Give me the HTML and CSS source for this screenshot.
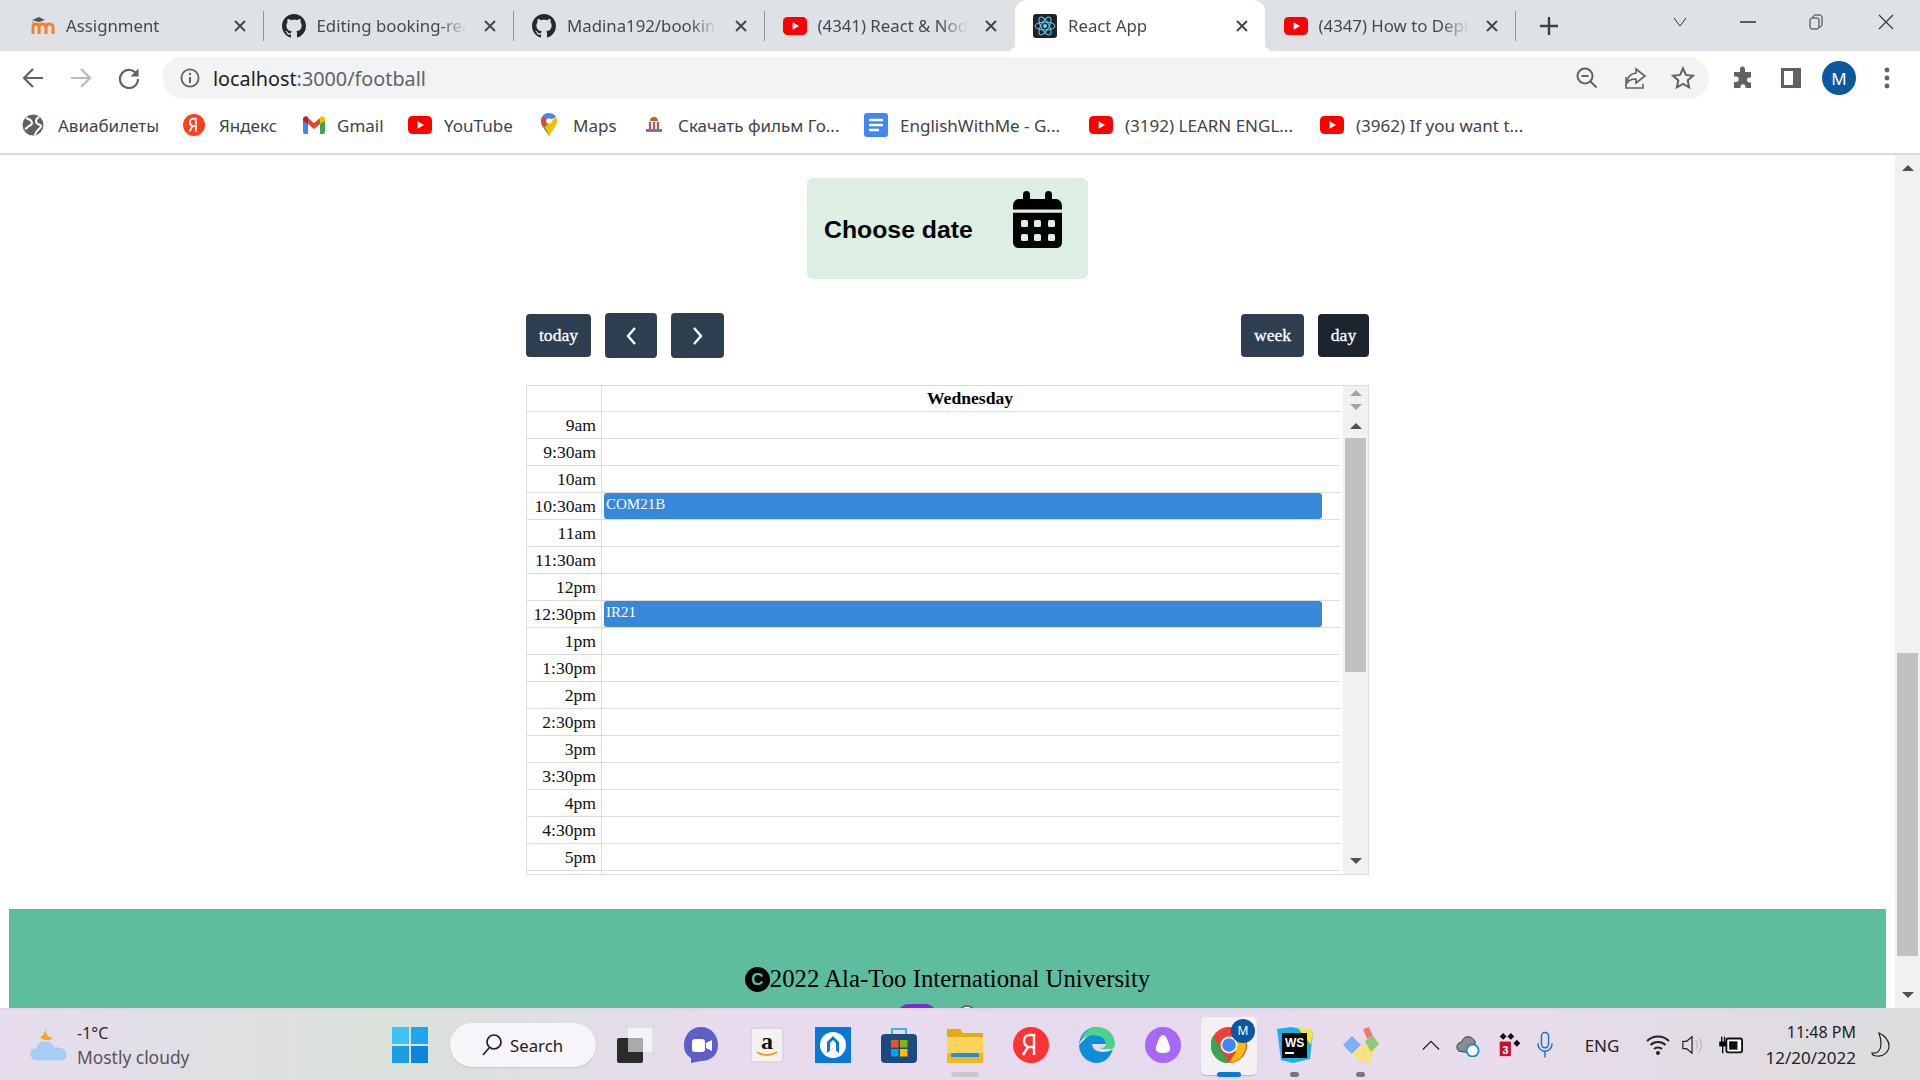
FILE: index.html
```html
<!DOCTYPE html>
<html lang="en">
<head>
<meta charset="utf-8">
<title>React App</title>
<link rel="stylesheet" href="styles.css">
</head>
<body>
<svg class="defs" width="0" height="0">
  <defs>
    <symbol id="gh" viewBox="0 0 16 16"><path fill="#24292e" d="M8 0C3.58 0 0 3.58 0 8c0 3.54 2.29 6.53 5.47 7.59.4.07.55-.17.55-.38 0-.19-.01-.82-.01-1.49-2.01.37-2.53-.49-2.69-.94-.09-.23-.48-.94-.82-1.13-.28-.15-.68-.52-.01-.53.63-.01 1.08.58 1.23.82.72 1.21 1.87.87 2.33.66.07-.52.28-.87.51-1.07-1.78-.2-3.64-.89-3.64-3.95 0-.87.31-1.59.82-2.15-.08-.2-.36-1.02.08-2.12 0 0 .67-.21 2.2.82.64-.18 1.32-.27 2-.27.68 0 1.36.09 2 .27 1.53-1.04 2.2-.82 2.2-.82.44 1.1.16 1.92.08 2.12.51.56.82 1.27.82 2.15 0 3.07-1.87 3.75-3.65 3.95.29.25.54.73.54 1.48 0 1.07-.01 1.93-.01 2.2 0 .21.15.46.55.38A8.013 8.013 0 0016 8c0-4.42-3.58-8-8-8z"/></symbol>
    <symbol id="yt" viewBox="0 0 24 18"><rect width="24" height="18" rx="4.5" fill="#f00"/><path d="M9.6 5.2v7.6l6.4-3.8z" fill="#fff"/></symbol>
    <symbol id="x" viewBox="0 0 12 12"><path d="M1 1l10 10M11 1L1 11" stroke="#44474b" stroke-width="2" fill="none"/></symbol>
  </defs>
</svg>
<div class="screen">

  <header class="tabstrip">
    <div class="tab">
      <svg class="tab-ico" viewBox="0 0 24 24"><path d="M2 20v-7c0-2 1-3 3-3s3 1 3 3v7M8 20v-7c0-2 1-3 3-3M11 10c3 0 4 1 4 3v7M15 13c0-2 1-3 3-3s4 1 4 3v7" fill="none" stroke="#f58220" stroke-width="3"/><path d="M1 6l7-3 6 3-6 2z" fill="#555"/><path d="M2 7v5" stroke="#999"/></svg>
      <span class="tab-text">Assignment</span>
      <svg class="tab-x"><use href="#x"/></svg>
    </div>
    <i class="tab-sep"></i>
    <div class="tab">
      <svg class="tab-ico"><use href="#gh"/></svg>
      <span class="tab-text">Editing booking-react-app</span>
      <svg class="tab-x"><use href="#x"/></svg>
    </div>
    <i class="tab-sep"></i>
    <div class="tab">
      <svg class="tab-ico"><use href="#gh"/></svg>
      <span class="tab-text">Madina192/booking-react</span>
      <svg class="tab-x"><use href="#x"/></svg>
    </div>
    <i class="tab-sep"></i>
    <div class="tab">
      <svg class="tab-ico"><use href="#yt"/></svg>
      <span class="tab-text">(4341) React &amp; Node JS</span>
      <svg class="tab-x"><use href="#x"/></svg>
    </div>
    <i class="tab-gap"></i>
    <div class="tab tab-active">
      <svg class="tab-ico" viewBox="0 0 24 24"><rect width="24" height="24" rx="3" fill="#20232a"/><g fill="none" stroke="#61dafb" stroke-width="1"><ellipse cx="12" cy="12" rx="10" ry="4"/><ellipse cx="12" cy="12" rx="10" ry="4" transform="rotate(60 12 12)"/><ellipse cx="12" cy="12" rx="10" ry="4" transform="rotate(120 12 12)"/></g><circle cx="12" cy="12" r="2" fill="#61dafb"/></svg>
      <span class="tab-text">React App</span>
      <svg class="tab-x"><use href="#x"/></svg>
    </div>
    <i class="tab-gap"></i>
    <div class="tab">
      <svg class="tab-ico"><use href="#yt"/></svg>
      <span class="tab-text">(4347) How to Deploy React</span>
      <svg class="tab-x"><use href="#x"/></svg>
    </div>
    <i class="tab-sep"></i>
    <svg class="tab-plus" viewBox="0 0 18 18"><path d="M9 0v18M0 9h18" stroke="#3c4043" stroke-width="2.4"/></svg>
    <div class="winctl">
      <svg class="win-chev" viewBox="0 0 16 16"><path d="M2 4l6 8 6-8" fill="none" stroke="#333" stroke-width="1"/></svg>
      <svg class="win-min" viewBox="0 0 16 16"><path d="M0 8h16" stroke="#222" stroke-width="1.4"/></svg>
      <svg class="win-res" viewBox="0 0 16 16"><rect x="2" y="4" width="9" height="11" rx="2" fill="none" stroke="#333"/><path d="M5 4V3c0-1 1-2 2-2h5c1 0 2 1 2 2v8c0 1-1 2-2 2h-1" fill="none" stroke="#333"/></svg>
      <svg class="win-x" viewBox="0 0 16 16"><path d="M1 1l14 14M15 1L1 15" stroke="#333" stroke-width="1.1"/></svg>
    </div>
  </header>

  <nav class="toolbar">
    <svg class="nav-ico" viewBox="0 0 22 22"><path d="M21 11H3M11 2l-9 9 9 9" fill="none" stroke="#5f6368" stroke-width="2.2"/></svg>
    <svg class="nav-ico" viewBox="0 0 22 22"><path d="M1 11h18M11 2l9 9-9 9" fill="none" stroke="#b8babd" stroke-width="2.2"/></svg>
    <svg class="nav-ico" viewBox="0 0 22 22"><path d="M18.5 7A9 9 0 1 0 20 12" fill="none" stroke="#5f6368" stroke-width="2.2"/><path d="M20.5 1.5v8h-8z" fill="#5f6368"/></svg>
    <div class="omnibox">
      <svg class="info-ico" viewBox="0 0 20 20"><circle cx="10" cy="10" r="8.6" fill="none" stroke="#5f6368" stroke-width="1.8"/><path d="M10 9v6" stroke="#5f6368" stroke-width="2"/><circle cx="10" cy="6" r="1.2" fill="#5f6368"/></svg>
      <span class="url"><b class="url-host">localhost</b>:3000/football</span>
      <div class="omni-actions">
        <svg class="omni-ico" viewBox="0 0 24 24"><circle cx="10" cy="10" r="7.5" fill="none" stroke="#5f6368" stroke-width="2"/><path d="M6.5 10h7M15.5 15.5l6 6" stroke="#5f6368" stroke-width="2"/></svg>
        <svg class="omni-ico" viewBox="0 0 24 24"><path d="M13 7V3l9 7-9 7v-4c-4 0-7 1-9 4 0-5 3-9 9-10z" fill="none" stroke="#5f6368" stroke-width="1.6"/><path d="M3 11v11h17v-4" fill="none" stroke="#5f6368" stroke-width="1.6"/></svg>
        <svg class="omni-ico" viewBox="0 0 24 24"><path d="M12 2.5l2.9 6.4 7 .8-5.2 4.7 1.4 6.9-6.1-3.5-6.1 3.5 1.4-6.9-5.2-4.7 7-.8z" fill="none" stroke="#5f6368" stroke-width="2"/></svg>
      </div>
    </div>
    <svg class="tool-puzzle" viewBox="0 0 24 24"><path d="M9 2.5a2.6 2.6 0 0 1 5 0V6h6v5.500h-2.200a2.600 2.600 0 0 0 0 5H20V22h-5.500v-1.800a2.600 2.600 0 0 0-5 0V22H3v-6h2a2.700 2.700 0 0 0 0-5.400H3V6h6z" fill="#5f6368"/></svg>
    <svg class="tool-side" viewBox="0 0 22 24"><path d="M1 2h20v20H1zM4 5v14h9V5z" fill="#5f6368" fill-rule="evenodd"/></svg>
    <div class="avatar">M</div>
    <svg class="tool-dots" viewBox="0 0 6 24"><circle cx="3" cy="4" r="2.400" fill="#5f6368"/><circle cx="3" cy="12" r="2.400" fill="#5f6368"/><circle cx="3" cy="20" r="2.400" fill="#5f6368"/></svg>
  </nav>

  <div class="bookmarks">
    <div class="bm bm-air"><svg class="bm-ico" viewBox="0 0 22 22"><circle cx="11" cy="11" r="10.500" fill="#5f6368"/><path d="M4 4c3 1 6 2 6 5s-4 2-5 5l-2 1M13 21c0-3 2-4 4-6s3-3 1-4-4-1-4-4 2-3 3-4" fill="none" stroke="#fff" stroke-width="2"/></svg><span>Авиабилеты</span></div>
    <div class="bm bm-ya"><svg class="bm-ico" viewBox="0 0 24 24"><circle cx="12" cy="12" r="12" fill="#fc3f1d"/><path d="M14 19V5h-2.500C9 5 7.500 6.800 7.500 9s1.200 3.500 3 4l-3.500 6M14 13h-3" fill="none" stroke="#fff" stroke-width="2"/></svg><span>Яндекс</span></div>
    <div class="bm bm-gm"><svg class="bm-gmail" viewBox="0 0 22 18"><path d="M0 3v13c0 1 .7 2 2 2h3V7z" fill="#4285f4"/><path d="M22 3v13c0 1-.7 2-2 2h-3V7z" fill="#34a853"/><path d="M5 8V2l6 5 6-5v6l-6 5z" fill="#ea4335"/><path d="M0 5V3c0-2.500 3-3.500 5-2v7z" fill="#c5221f"/><path d="M22 5V3c0-2.500-3-3.500-5-2v7z" fill="#fbbc04"/></svg><span>Gmail</span></div>
    <div class="bm bm-yt"><svg class="bm-yt-ico"><use href="#yt"/></svg><span>YouTube</span></div>
    <div class="bm bm-map"><svg class="bm-maps" viewBox="0 0 16 24"><path d="M8 24C6 18 0 14 0 8a8 8 0 0 1 8-8z" fill="#34a853"/><path d="M8 24c2-6 8-10 8-16 0-1.500-.4-3-1.100-4L4 14c1.500 3 3 6 4 10z" fill="#fbbc04"/><path d="M1.500 3.500A8 8 0 0 0 0 8c0 2 .7 4 2 6l6-6z" fill="#ea4335"/><path d="M2 3l5 5 8-4a8 8 0 0 0-13-1z" fill="#4285f4"/><circle cx="8" cy="8" r="2.800" fill="#fff"/></svg><span>Maps</span></div>
    <div class="bm bm-film"><svg class="bm-ticket" viewBox="0 0 18 20"><path d="M5 6a4 4 0 0 1 8 0z" fill="#b4652c"/><rect x="3" y="6" width="12" height="8" fill="#eee"/><path d="M5 7v7M9 7v7M13 7v7" stroke="#a33" stroke-width="1.600"/><rect x="1" y="14" width="16" height="3" fill="#8a6ab0"/></svg><span>Скачать фильм Го...</span></div>
    <div class="bm bm-doc"><svg class="bm-doc-ico" viewBox="0 0 24 24"><rect width="24" height="24" rx="3" fill="#4285f4"/><path d="M5 7h14M5 12h14M5 17h10" stroke="#fff" stroke-width="2.400"/></svg><span>EnglishWithMe - G...</span></div>
    <div class="bm bm-learn"><svg class="bm-yt-ico"><use href="#yt"/></svg><span>(3192) LEARN ENGL...</span></div>
    <div class="bm bm-want"><svg class="bm-yt-ico"><use href="#yt"/></svg><span>(3962) If you want t...</span></div>
  </div>

  <div class="page">
    <main class="content">
      <div class="choose">
        <span class="choose-text">Choose date</span>
        <svg class="choose-ico" viewBox="0 0 49 57"><path d="M10 3.500a3.500 3.500 0 0 1 7 0V8h15V3.500a3.500 3.500 0 0 1 7 0V8h4c3 0 6 3 6 7v3.500H0V15c0-4 3-7 6-7h4z" fill="#000"/><path d="M0 21.700h49V51c0 3-2 6-5 6H5c-3 0-5-3-5-6z" fill="#000"/><g fill="#ddeee2"><rect x="8" y="29" width="7" height="7" rx="1.500"/><rect x="21" y="29" width="7" height="7" rx="1.500"/><rect x="35" y="29" width="7" height="7" rx="1.500"/><rect x="8" y="43" width="7" height="7" rx="1.500"/><rect x="21" y="43" width="7" height="7" rx="1.500"/><rect x="35" y="43" width="7" height="7" rx="1.500"/></g></svg>
      </div>

      <div class="fc">
        <div class="fc-toolbar">
          <div class="fc-group">
            <span class="fc-btn fc-btn-today">today</span>
            <span class="fc-btn fc-btn-prev"><svg class="fc-chev" viewBox="0 0 12 20"><path d="M10 2l-7 8 7 8" fill="none" stroke="#fff" stroke-width="2.400"/></svg></span>
            <span class="fc-btn fc-btn-next"><svg class="fc-chev" viewBox="0 0 12 20"><path d="M2 2l7 8-7 8" fill="none" stroke="#fff" stroke-width="2.400"/></svg></span>
          </div>
          <div class="fc-group">
            <span class="fc-btn fc-btn-week">week</span>
            <span class="fc-btn fc-btn-day">day</span>
          </div>
        </div>

        <div class="cal">
          <div class="cal-main">
            <div class="cal-row cal-head"><div class="cal-time"></div><div class="cal-day cal-dayname">Wednesday</div></div>
            <div class="cal-row"><div class="cal-time">9am</div><div class="cal-day"></div></div>
            <div class="cal-row"><div class="cal-time">9:30am</div><div class="cal-day"></div></div>
            <div class="cal-row"><div class="cal-time">10am</div><div class="cal-day"></div></div>
            <div class="cal-row"><div class="cal-time">10:30am</div><div class="cal-day"><div class="event">COM21B</div></div></div>
            <div class="cal-row"><div class="cal-time">11am</div><div class="cal-day"></div></div>
            <div class="cal-row"><div class="cal-time">11:30am</div><div class="cal-day"></div></div>
            <div class="cal-row"><div class="cal-time">12pm</div><div class="cal-day"></div></div>
            <div class="cal-row"><div class="cal-time">12:30pm</div><div class="cal-day"><div class="event">IR21</div></div></div>
            <div class="cal-row"><div class="cal-time">1pm</div><div class="cal-day"></div></div>
            <div class="cal-row"><div class="cal-time">1:30pm</div><div class="cal-day"></div></div>
            <div class="cal-row"><div class="cal-time">2pm</div><div class="cal-day"></div></div>
            <div class="cal-row"><div class="cal-time">2:30pm</div><div class="cal-day"></div></div>
            <div class="cal-row"><div class="cal-time">3pm</div><div class="cal-day"></div></div>
            <div class="cal-row"><div class="cal-time">3:30pm</div><div class="cal-day"></div></div>
            <div class="cal-row"><div class="cal-time">4pm</div><div class="cal-day"></div></div>
            <div class="cal-row"><div class="cal-time">4:30pm</div><div class="cal-day"></div></div>
            <div class="cal-row"><div class="cal-time">5pm</div><div class="cal-day"></div></div>
            <div class="cal-row"><div class="cal-time"></div><div class="cal-day"></div></div>
          </div>
          <div class="cal-scroll">
            <i class="arrow-up arrow-faint cal-a1"></i>
            <i class="arrow-down arrow-faint cal-a2"></i>
            <i class="arrow-up arrow-dark cal-a3"></i>
            <div class="cal-thumb"></div>
            <i class="arrow-down arrow-dark cal-a4"></i>
          </div>
        </div>
      </div>

      <footer class="footer">
        <p class="footer-text"><span class="copy">C</span>2022 Ala-Too International University</p>
        <div class="footer-social">
          <svg class="soc soc-purple" viewBox="0 0 38 38"><rect width="38" height="38" rx="10" fill="#7b2fc9"/></svg>
          <svg class="soc soc-gray" viewBox="0 0 18 18"><circle cx="9" cy="9" r="8" fill="#fff" stroke="#555" stroke-width="1.500"/></svg>
        </div>
      </footer>
    </main>
    <aside class="page-scroll">
      <i class="arrow-up arrow-dark ps-a1"></i>
      <div class="ps-thumb"></div>
      <i class="arrow-down arrow-dark ps-a2"></i>
    </aside>
  </div>

  <div class="taskbar">
    <div class="weather">
      <svg class="weather-ico" viewBox="0 0 37 34"><path d="M16 0c-1 5 1 9 7 10-3 3-10 3-13-1 2 0 5-4 6-9z" fill="#f5a623"/><path d="M8 33c-5 0-8-3-8-7s3-6 6-6c1-5 5-8 10-7 4 0 7 3 8 6 7-1 13 2 13 8 0 4-3 6-7 6z" fill="#a9cdf0" stroke="#d9e6f6"/></svg>
      <div class="weather-text"><span class="weather-temp">-1°C</span><span class="weather-desc">Mostly cloudy</span></div>
    </div>
    <div class="apps">
      <svg class="app" viewBox="0 0 36 36"><path d="M0 0h17v17H0z" fill="#3ec2f3"/><path d="M19 0h17v17H19z" fill="#1ea5ec"/><path d="M0 19h17v17H0z" fill="#1b9de6"/><path d="M19 19h17v17H19z" fill="#0c86dc"/></svg>
      <div class="search"><svg class="search-ico" viewBox="0 0 20 24"><circle cx="12" cy="9" r="7" fill="none" stroke="#222" stroke-width="1.700"/><path d="M7 15l-6 7" stroke="#222" stroke-width="1.700"/></svg><span>Search</span></div>
      <svg class="app" viewBox="0 0 36 36"><rect x="11" y="1" width="24" height="24" fill="#f4f4f6"/><rect y="11" width="26" height="25" rx="2" fill="#2b2b2b"/><rect x="11" y="11" width="15" height="14" fill="#aaa"/></svg>
      <svg class="app" viewBox="0 0 36 36"><path d="M18 0c10 0 17 8 17 18s-7 16-17 16l-10 2v-5C3 28 1 24 1 18 1 8 8 0 18 0z" fill="#5b5fc7"/><rect x="9" y="12" width="13" height="13" rx="3" fill="#fff"/><path d="M23 16l6-3v11l-6-3z" fill="#fff"/></svg>
      <svg class="app" viewBox="0 0 36 36"><rect x="2" y="1" width="32" height="34" rx="3" fill="#f3f1f1" stroke="#ccc"/><text x="18" y="22" class="amz">a</text><path d="M8 25c6 4 14 4 20 0" fill="none" stroke="#f90" stroke-width="2"/></svg>
      <svg class="app" viewBox="0 0 36 36"><rect width="36" height="36" fill="#0a78d7"/><circle cx="18" cy="18" r="13" fill="#fff"/><path d="M12 26V15l6-6 6 6v11l-6-5z" fill="#0a78d7"/><path d="M15 24v-8l3-3 3 3v8l-3-3z" fill="#fff"/></svg>
      <svg class="app" viewBox="0 0 36 36"><path d="M11 8V2h14v6" fill="none" stroke="#39b7ea" stroke-width="2"/><rect y="7" width="36" height="29" rx="4" fill="#1c4a7e"/><rect x="10" y="13" width="7.500" height="7.500" fill="#f25022"/><rect x="19" y="13" width="7.500" height="7.500" fill="#7fba00"/><rect x="10" y="22" width="7.500" height="7.500" fill="#00a4ef"/><rect x="19" y="22" width="7.500" height="7.500" fill="#ffb900"/></svg>
      <div class="app-wrap"><svg class="app" viewBox="0 0 36 36"><path d="M0 2h13l3 4h20v30H0z" fill="#e7a913"/><path d="M0 10h36v26H0z" fill="#fcd35c"/><path d="M0 26h36v10H0z" fill="#f0b81c"/><path d="M4 28c0-1 1-2 2-2h24c1 0 2 1 2 2v2H4z" fill="#1d8fe0"/></svg><i class="ind ind-wide"></i></div>
      <svg class="app" viewBox="0 0 36 36"><circle cx="18" cy="18" r="18" fill="#f33"/><path d="M21 28V8h-4c-4 0-6 2.500-6 6s2 5 4 6l-5 8M21 20h-5" fill="none" stroke="#fff" stroke-width="2.400"/></svg>
      <svg class="app" viewBox="0 0 36 36"><path d="M18 0C8 0 1 7 0 17 3 10 9 8 15 8c8 0 12 4 12 9H13c0 5 5 8 11 8 4 0 8-1 10-3-3 9-9 14-16 14C8 36 0 28 0 18" fill="#0c8fd8"/><path d="M18 0c10 0 18 7 18 17 0 3-2 5-6 5H21c3-1 6-3 6-5 0-5-4-9-12-9C10 8 5 10 2 13 5 5 11 0 18 0z" fill="#4fd18c"/></svg>
      <svg class="app" viewBox="0 0 36 36"><circle cx="18" cy="18" r="18" fill="#a668f5"/><path d="M18 8c3 0 5 6 7 12 1 4-2 6-7 6s-8-2-7-6c2-6 4-12 7-12z" fill="#fff"/></svg>
      <div class="app-wrap app-active"><svg class="app" viewBox="0 0 36 36"><circle cx="18" cy="18" r="18" fill="#ea4335"/><path d="M18 36A18 18 0 0 1 2 9l9 16z" fill="#34a853"/><path d="M18 36a18 18 0 0 0 15-26H18l7 15z" fill="#fbbc04"/><circle cx="18" cy="18" r="8.500" fill="#fff"/><circle cx="18" cy="18" r="6.800" fill="#4285f4"/></svg><span class="chrome-badge">M</span><i class="ind ind-blue"></i></div>
      <div class="app-wrap"><svg class="app" viewBox="0 0 36 36"><path d="M0 2l14-2 22 4-3 28-17 4-12-3z" fill="#13b4e8"/><path d="M20 0l16 4-2 14z" fill="#f9e534"/><rect x="5" y="6" width="25" height="25" fill="#000"/><text x="8" y="20" class="ws">WS</text><path d="M8 26h9" stroke="#fff" stroke-width="2"/></svg><i class="ind"></i></div>
      <div class="app-wrap"><svg class="app" viewBox="0 0 36 36"><path d="M0 18l9-9 9 9-9 9z" fill="#7ab1f7"/><path d="M18 18h16l-8 18h-4z" fill="#fbe17d"/><path d="M20 2l6-2 4 9-6 3z" fill="#e97c75"/><path d="M22 14l8-5 6 8-8 8z" fill="#8bcb73"/><path d="M18 18l-9 9 9 9 4-10z" fill="#fbe17d"/></svg><i class="ind"></i></div>
    </div>
    <div class="tray">
      <svg class="tray-s" viewBox="0 0 20 12"><path d="M1 11l9-9 9 9" fill="none" stroke="#222" stroke-width="1.400"/></svg>
      <svg class="tray-m" viewBox="0 0 26 26"><path d="M5 20c-3 0-4-2-4-5s2-5 5-5c1-4 4-6 7-6 4 0 7 3 8 6l-3 12z" fill="#8c8c90" stroke="#333"/><circle cx="18" cy="19" r="6.500" fill="#fff" stroke="#1b8ad6" stroke-width="2"/></svg>
      <svg class="tray-m" viewBox="0 0 26 28"><path d="M5 0l4 4-4 4-4-4zM14 0l4 4-4 4-4-4zM21 8l4 4-4 4-4-4z" fill="#111"/><rect x="1" y="10" width="13" height="17" fill="#c8102e"/><text x="4" y="24" class="badge3">3</text></svg>
      <svg class="tray-mic" viewBox="0 0 18 30"><rect x="5" y="1" width="8" height="17" rx="4" fill="none" stroke="#1a73c4" stroke-width="1.600"/><path d="M1 13c0 5 3 9 8 9s8-4 8-9M9 22v7" fill="none" stroke="#1a73c4" stroke-width="1.600"/></svg>
      <span class="tray-text">ENG</span>
      <svg class="tray-m" viewBox="0 0 24 22"><path d="M1 7c6-6 16-6 22 0M4.500 11c4-4 11-4 15 0M8 15c2-2 6-2 8 0" fill="none" stroke="#222" stroke-width="1.800"/><circle cx="12" cy="19" r="2" fill="#222"/></svg>
      <svg class="tray-m" viewBox="0 0 26 26"><path d="M2 9h4l6-5v18l-6-5H2z" fill="none" stroke="#222" stroke-width="1.300"/><path d="M16 8c2 3 2 7 0 10M19 5c4 5 4 11 0 16" fill="none" stroke="#aaa"/></svg>
      <svg class="tray-m" viewBox="0 0 26 26"><rect x="8" y="6" width="17" height="15" rx="2" fill="#fff" stroke="#111" stroke-width="2"/><rect x="11" y="9" width="9" height="9" fill="#111"/><path d="M1 10h6v4H1zM3 4v6M6 4v6M4 14v8" stroke="#111" stroke-width="1.500"/></svg>
      <div class="clock"><span>11:48 PM</span><span class="clock-date">12/20/2022</span></div>
      <svg class="tray-moon" viewBox="0 0 20 26"><path d="M8 1c5 2 10 7 10 13 0 6-6 11-12 10-3 0-5-1-5-3 6 1 9-3 9-9 0-4-1-8-2-11z" fill="none" stroke="#222" stroke-width="1.200"/></svg>
    </div>
  </div>
</div>
</body>
</html>
```
FILE: styles.css
```css
* { box-sizing: border-box; }
html, body { margin: 0; padding: 0; height: 100%; overflow: hidden; background: #fff; }
body { font-family: "Noto Sans", sans-serif; }
.defs { position: absolute; }
.screen { width: 1920px; height: 1080px; display: flex; flex-direction: column; overflow: hidden; }
i { display: block; font-style: normal; }

/* tabs */
.tabstrip { height: 51px; flex: none; background: #dee1e6; display: flex; align-items: center; padding-left: 13px; }
.tab { position: relative; width: 249.5px; height: 51px; flex: none; display: flex; align-items: center; padding: 0 17px 0 18px; }
.tab-active { background: #fff; border-radius: 12px 12px 0 0; }
.tab-active::before, .tab-active::after { content: ""; position: absolute; bottom: 0; width: 8px; height: 8px; }
.tab-active::before { left: -8px; background: radial-gradient(circle at 0 0, transparent 8px, #fff 8.5px); }
.tab-active::after { right: -8px; background: radial-gradient(circle at 100% 0, transparent 8px, #fff 8.5px); }
.tab-ico { width: 24px; height: 24px; flex: none; margin-right: 11px; }
.tab-text { flex: 1; min-width: 0; white-space: nowrap; overflow: hidden; font-size: 16.8px; color: #45484d; -webkit-mask-image: linear-gradient(90deg, #000 78%, transparent 96%); mask-image: linear-gradient(90deg, #000 78%, transparent 96%); }
.tab-x { width: 12px; height: 12px; flex: none; margin-left: 11px; }
.tab-sep { width: 1px; height: 30px; flex: none; background: #90949a; }
.tab-gap { width: 1px; flex: none; }
.tab-plus { width: 18px; height: 18px; margin-left: 24px; flex: none; }
.winctl { margin-left: auto; display: flex; align-items: center; padding-right: 26px; }
.win-chev { width: 16px; height: 16px; margin-top: -8px; }
.win-min { width: 16px; height: 16px; margin-left: 52px; margin-top: -8px; }
.win-res { width: 16px; height: 18px; margin-left: 52px; margin-top: -8px; }
.win-x { width: 16px; height: 16px; margin-left: 54px; margin-top: -8px; }

/* toolbar */
.toolbar { height: 55px; flex: none; display: flex; align-items: flex-start; padding: 6px 0 0 22px; background: #fff; }
.nav-ico { width: 22px; height: 22px; flex: none; margin: 10px 26px 0 0; }
.nav-ico:nth-of-type(3) { margin-right: 22px; }
.omnibox { width: 1547px; height: 42px; flex: none; border-radius: 21px; background: #f1f3f4; display: flex; align-items: center; padding: 0 14px 0 18px; }
.info-ico { width: 20px; height: 20px; flex: none; margin-right: 13px; }
.url { font-size: 19.8px; color: #5f6368; white-space: nowrap; }
.url-host { font-weight: 400; color: #202124; }
.omni-actions { margin-left: auto; display: flex; gap: 24px; }
.omni-ico { width: 24px; height: 24px; }
.tool-puzzle { width: 24px; height: 24px; flex: none; margin: 9px 0 0 22px; }
.tool-side { width: 24px; height: 24px; flex: none; margin: 9px 0 0 24px; }
.avatar { width: 34px; height: 34px; flex: none; margin: 4px 0 0 19px; border-radius: 50%; background: #0b57a0; color: #fff; font-size: 17px; display: flex; align-items: center; justify-content: center; }
.tool-dots { width: 6px; height: 24px; flex: none; margin: 9px 0 0 28px; }

/* bookmarks */
.bookmarks { height: 49px; flex: none; display: flex; align-items: flex-start; padding: 6px 0 0 22px; border-bottom: 2px solid #dadada; background: #fff; }
.bm { display: flex; align-items: center; height: 26px; font-size: 17px; color: #3f4347; white-space: nowrap; flex: none; }
.bm-ico { width: 22px; height: 22px; margin-right: 14px; flex: none; }
.bm-gmail { width: 22px; height: 18px; margin-right: 12px; flex: none; }
.bm-yt-ico { width: 24px; height: 18px; margin-right: 12px; flex: none; }
.bm-maps { width: 16px; height: 24px; margin-right: 16px; flex: none; }
.bm-ticket { width: 18px; height: 20px; margin-right: 15px; flex: none; }
.bm-doc-ico { width: 24px; height: 24px; margin-right: 12px; flex: none; }
.bm-air { width: 161px; }
.bm-ya { width: 120px; }
.bm-gm { width: 105px; }
.bm-yt { width: 133px; }
.bm-map { width: 104px; }
.bm-film { width: 219px; }
.bm-doc { width: 225px; }
.bm-learn { width: 231px; }

/* page */
.page { flex: 1; min-height: 0; display: flex; overflow: hidden; }
.content { flex: 1; min-width: 0; display: flex; flex-direction: column; align-items: center; padding-top: 23px; overflow: hidden; }
.choose { width: 281px; height: 101px; flex: none; border-radius: 6px; background: #ddeee2; display: flex; justify-content: space-between; padding: 13px 26px 0 17px; }
.choose-text { font: 700 24.8px "Liberation Sans", Arial, sans-serif; color: #000; margin-top: 24px; line-height: 30px; }
.choose-ico { width: 49px; height: 57px; flex: none; }
.fc { width: 843px; flex: none; margin-top: 34px; font-family: "Liberation Serif", serif; }
.fc-toolbar { display: flex; justify-content: space-between; align-items: center; height: 45px; margin-bottom: 27px; }
.fc-group { display: flex; align-items: center; gap: 14px; }
.fc-btn { height: 43px; display: flex; align-items: center; justify-content: center; background: #2c3e50; color: #fff; border-radius: 4px; font-size: 17.6px; -webkit-text-stroke: .3px #fff; }
.fc-btn-today { width: 65px; }
.fc-btn-prev { width: 52px; height: 45px; }
.fc-btn-next { width: 53px; height: 45px; }
.fc-btn-week { width: 63px; }
.fc-btn-day { width: 51px; background: #1a252f; }
.fc-chev { width: 12px; height: 20px; }

/* calendar */
.cal { height: 490px; display: flex; border: 1px solid #ddd; overflow: hidden; }
.cal-main { width: 813px; flex: none; display: flex; flex-direction: column; }
.cal-row { height: 27px; flex: none; display: flex; border-bottom: 1px solid #ddd; }
.cal-head { height: 26px; }
.cal-time { width: 75px; flex: none; border-right: 1px solid #ddd; text-align: right; padding-right: 5px; font-size: 17.6px; line-height: 26px; color: #111; }
.cal-day { flex: 1; min-width: 0; padding-left: 2px; }
.cal-dayname { text-align: center; font-weight: 700; font-size: 17.6px; line-height: 25px; padding: 0 2px 0 0; color: #000; }
.event { width: 718px; height: 26px; padding-left: 2px; background: #3788d8; border-radius: 3px; color: #fff; font-size: 15px; line-height: 22px; }
.cal-scroll { width: 25px; flex: none; margin-left: 3px; background: #f1f1f1; display: flex; flex-direction: column; align-items: center; }
.cal-thumb { width: 21px; height: 234px; flex: none; background: #c1c1c1; margin-top: 9px; }
.arrow-up, .arrow-down { width: 0; height: 0; flex: none; border-left: 6px solid transparent; border-right: 6px solid transparent; }
.arrow-up.arrow-dark { border-bottom: 6px solid #505050; }
.arrow-down.arrow-dark { border-top: 6px solid #505050; }
.arrow-up.arrow-faint { border-bottom: 6px solid #a3a3a3; }
.arrow-down.arrow-faint { border-top: 6px solid #a3a3a3; }
.cal-a1 { margin-top: 4px; }
.cal-a2 { margin-top: 8px; }
.cal-a3 { margin-top: 13px; }
.cal-a4 { margin-top: 186px; }

/* footer */
.footer { align-self: stretch; flex: none; margin: 34px 9px 0; background: #5dbd9e; padding-top: 53px; height: 200px; font-family: "Liberation Serif", serif; text-align: center; }
.footer-text { margin: 0; font-size: 24.8px; line-height: 34px; color: #000; display: flex; justify-content: center; align-items: center; }
.copy { width: 25px; height: 25px; border-radius: 50%; background: #000; color: #5dbd9e; font: 700 17px/25px "Liberation Sans", sans-serif; text-align: center; }
.footer-social { display: flex; justify-content: center; align-items: flex-start; margin-top: 8px; gap: 22px; padding-right: 22px; }
.soc-purple { width: 38px; height: 38px; }
.soc-gray { width: 18px; height: 18px; margin-top: 1px; }

.page-scroll { width: 25px; flex: none; background: #f1f1f1; display: flex; flex-direction: column; align-items: center; }
.ps-a1 { margin-top: 10px; }
.ps-thumb { width: 21px; height: 303px; flex: none; margin-top: 482px; background: #c1c1c1; }
.ps-a2 { margin-top: 36px; }

/* taskbar */
.taskbar { height: 72px; flex: none; display: flex; align-items: center; padding-left: 30px; border-top: 2px solid #dfd8e4; background: linear-gradient(90deg, #e7dcee 0%, #dae2da 20%, #e8dbee 38%, #e6dbec 60%, #e8dcec 78%, #dcdcdd 100%); color: #3a3a3a; }
.weather { width: 362px; flex: none; display: flex; align-items: center; gap: 10px; }
.weather-ico { width: 37px; height: 34px; flex: none; }
.weather-text { display: flex; flex-direction: column; line-height: 24px; font-size: 17.4px; }
.weather-temp { color: #2a2a2a; font-size: 16px; }
.weather-desc { color: #555; }
.apps { display: flex; align-items: center; gap: 30px; flex: none; }
.app { width: 36px; height: 36px; flex: none; display: block; }
.search { width: 146px; height: 44px; margin: 0 -9px 0 -8px; border-radius: 22px; background: #f7f5f9; box-shadow: 0 1px 2px rgba(0,0,0,.12); display: flex; align-items: center; padding-left: 32px; gap: 8px; font-size: 16.8px; color: #222; }
.search-ico { width: 20px; height: 24px; }
.app-wrap { position: relative; width: 36px; height: 36px; flex: none; }
.app-active::before { content: ""; position: absolute; left: -10px; top: -10px; width: 56px; height: 58px; border-radius: 5px; background: #f3f1f4; box-shadow: 0 1px 1px rgba(0,0,0,.2); }
.app-active .app { position: relative; }
.ind { position: absolute; left: 13px; top: 45px; width: 9px; height: 5px; border-radius: 3px; background: #777; }
.ind-wide { left: 4px; width: 28px; background: #c9c6cc; }
.ind-blue { left: 6px; width: 24px; background: #0a78d7; }
.chrome-badge { position: absolute; right: -8px; top: -8px; width: 24px; height: 24px; border-radius: 50%; background: #0b57a0; color: #fff; font-size: 12px; line-height: 24px; text-align: center; }
.amz { font: 700 24px "Liberation Serif", serif; text-anchor: middle; fill: #111; }
.ws { font: 700 12px "Liberation Sans", sans-serif; fill: #fff; }
.badge3 { font: 700 13px "Liberation Sans", sans-serif; fill: #fff; }
.tray { margin-left: 34px; display: grid; grid-template-columns: 36px 38px 46px 24px 90px 22px 48px 28px 111px 50px; justify-items: center; align-items: center; flex: none; }
.tray-s { width: 18px; height: 12px; }
.tray-m { width: 24px; height: 24px; }
.tray-mic { width: 16px; height: 30px; }
.tray-text { font-size: 17px; color: #222; }
.clock { justify-self: end; display: flex; flex-direction: column; align-items: flex-end; font-size: 16px; line-height: 25px; color: #222; white-space: nowrap; }
.clock-date { font-size: 17px; }
.tray-moon { width: 20px; height: 26px; }
```
